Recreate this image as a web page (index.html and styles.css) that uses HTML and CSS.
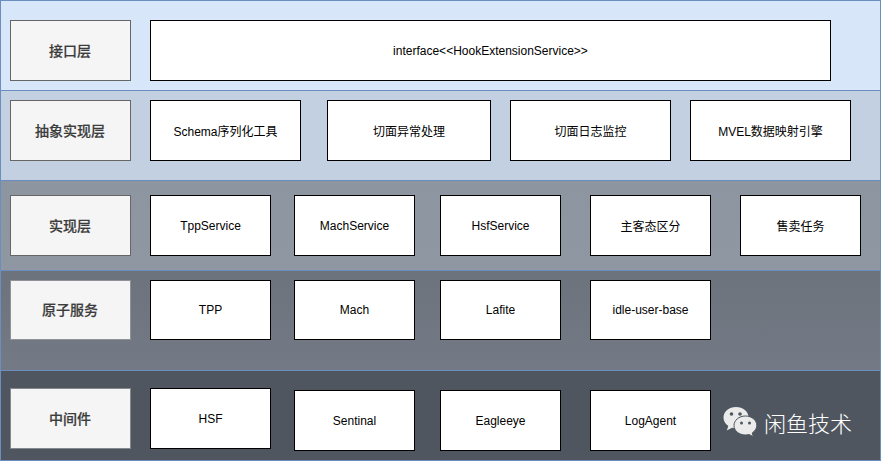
FILE: index.html
```html
<!DOCTYPE html>
<html lang="zh">
<head>
<meta charset="utf-8">
<title>Architecture layers</title>
<link rel="stylesheet" href="styles.css">
</head>
<body>
<main class="stack">
  <section class="band band-interface">
    <div class="cell label">接口层</div>
    <div class="cell service wide">interface&lt;&lt;HookExtensionService&gt;&gt;</div>
  </section>
  <section class="band band-abstract">
    <div class="cell label">抽象实现层</div>
    <div class="cell service w151">Schema序列化工具</div>
    <div class="cell service w164 ml26">切面异常处理</div>
    <div class="cell service w161 ml19">切面日志监控</div>
    <div class="cell service w161 ml19">MVEL数据映射引擎</div>
  </section>
  <section class="band band-impl">
    <div class="cell label">实现层</div>
    <div class="cell service">TppService</div>
    <div class="cell service ml23">MachService</div>
    <div class="cell service ml25">HsfService</div>
    <div class="cell service ml29">主客态区分</div>
    <div class="cell service ml29">售卖任务</div>
  </section>
  <section class="band band-atom">
    <div class="cell label">原子服务</div>
    <div class="cell service">TPP</div>
    <div class="cell service ml23">Mach</div>
    <div class="cell service ml25">Lafite</div>
    <div class="cell service ml29">idle-user-base</div>
  </section>
  <section class="band band-middle">
    <div class="cell label">中间件</div>
    <div class="cell service">HSF</div>
    <div class="cell service ml23 drop">Sentinal</div>
    <div class="cell service ml25 drop">Eagleeye</div>
    <div class="cell service ml29 drop">LogAgent</div>
  </section>
  <div class="watermark">
    <svg class="wechat" viewBox="0 0 34 31" width="34" height="31" aria-hidden="true">
      <path class="bubble" d="M13 1C6 1 0.500 5.500 0.500 11.500C0.500 15 2.300 17.900 5.300 20L3.800 24.500L9 21.700C10.500 22.100 11.800 22.300 13 22.300C20 22.300 25.500 17.500 25.500 11.500C25.500 5.500 20 1 13 1Z"/>
      <path class="bubble front" d="M22.500 10C15.900 10 11 14.300 11 19.500C11 24.700 15.900 29 22.500 29C23.700 29 24.900 28.800 26 28.500L30.300 30.700L29.200 27C32 25 33.800 22.400 33.800 19.500C33.800 14.300 29 10 22.500 10Z"/>
      <circle class="eye" cx="8.500" cy="8" r="1.800"/>
      <circle class="eye" cx="17" cy="8" r="1.800"/>
      <circle class="eye" cx="18.500" cy="17" r="1.500"/>
      <circle class="eye" cx="26.500" cy="17" r="1.500"/>
    </svg>
    <span class="brand">闲鱼技术</span>
  </div>
</main>
</body>
</html>
```
FILE: styles.css
```css
* { box-sizing: border-box; }
html, body { margin: 0; padding: 0; background: #fff; }
body {
  width: 881px;
  height: 462px;
  overflow: hidden;
  font-family: "Liberation Sans", "Noto Sans CJK SC", sans-serif;
  font-size: 12px;
  color: #000;
}
.stack { position: relative; width: 881px; }
.band {
  display: flex;
  align-items: flex-start;
  height: 90px;
  padding-left: 9px;
  border: 1px solid #6c8ebf;
  border-bottom: 0;
}
.band-interface { padding-top: 19px; background: #d8e6f9; }
.band-abstract { padding-top: 9px; background: #c3d0e2; }
.band-impl { padding-top: 14px; background: linear-gradient(#8d95a1, #8f97a3); }
.band-atom { height: 100px; padding-top: 9px; background: linear-gradient(#6d737d, #747a85); }
.band-middle { height: 91px; padding-top: 17px; background: #4f565f; border-bottom: 1px solid #6c8ebf; }

.cell {
  display: flex;
  align-items: center;
  justify-content: center;
  flex: none;
  width: 121px;
  height: 61px;
}
.label {
  margin-right: 19px;
  padding: 0 1px 2px 0;
  background: #f5f5f5;
  border: 1px solid #666;
  color: #3c3c3c;
  font-size: 14px;
  font-weight: 500;
  -webkit-text-stroke: 0.2px #3c3c3c;
}
.service { background: #fff; border: 1px solid #000; }
.band-atom .cell { height: 60px; }
.band-atom .label { border-color: #8f9296; }
.band-middle .label { border-color: #85898e; }

.wide { width: 681px; }
.w151 { width: 151px; }
.w161 { width: 161px; }
.w164 { width: 164px; }
.ml19 { margin-left: 19px; }
.ml23 { margin-left: 23px; }
.ml25 { margin-left: 25px; }
.ml26 { margin-left: 26px; }
.ml29 { margin-left: 29px; }
.drop { margin-top: 2px; }

.watermark {
  position: absolute;
  left: 723px;
  top: 406px;
  display: flex;
  align-items: center;
  gap: 7px;
}
.wechat { display: block; }
.bubble { fill: #ebebeb; }
.front { stroke: #4f565f; stroke-width: 1; }
.eye { fill: #4f565f; }
.brand {
  color: #fff;
  font-family: "Noto Sans CJK SC", sans-serif;
  font-size: 22px;
  font-weight: 300;
  line-height: 30px;
}
```
